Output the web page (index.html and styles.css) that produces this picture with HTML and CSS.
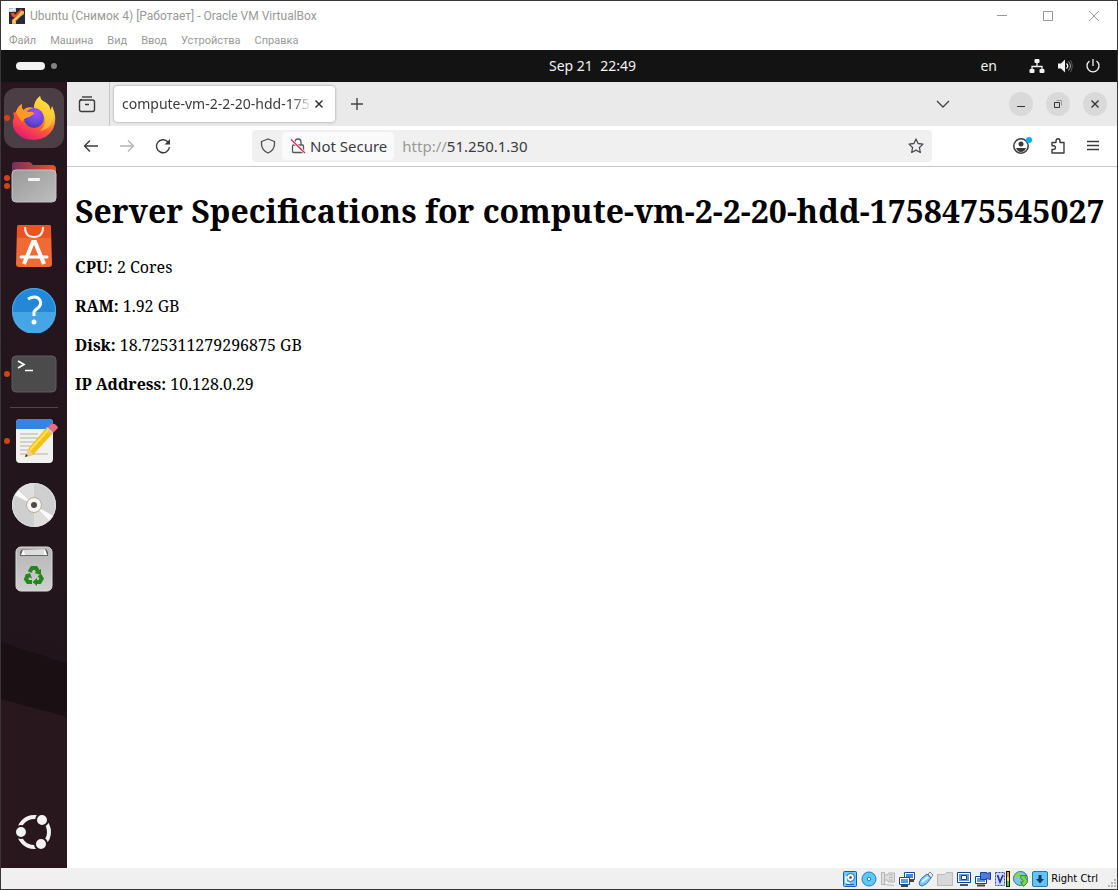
FILE: index.html
```html
<!DOCTYPE html>
<html lang="ru">
<head>
<meta charset="utf-8">
<title>Ubuntu (Снимок 4) [Работает] - Oracle VM VirtualBox</title>
<link rel="stylesheet" href="styles.css">
</head>
<body>
<div class="vm-window">
  <header class="titlebar">
    <svg class="app-icon" width="16" height="16" viewBox="0 0 16 16" aria-hidden="true"><rect width="16" height="16" fill="#262a3c"/><path d="M3 5q2 4 4 3L13 2" stroke="#e8501c" stroke-width="3" fill="none"/><path d="M15 3v3l-4 3-4 4v3H3v-4l5-4 4-5z" fill="#f7a93f"/><path d="M13 4l-4 5-4 3v3" stroke="#ffe3a0" fill="none"/><path d="M0 0h7v4H0z" fill="#b9bcc2"/><path d="M1 1v2h2V1m1 2V1h2v2" stroke="#fff" fill="none"/></svg>
    <span class="window-title">Ubuntu (Снимок 4) [Работает] - Oracle VM VirtualBox</span>
    <div class="window-buttons">
      <button class="plain" aria-label="Свернуть"><svg width="12" height="12" viewBox="0 0 12 12"><path d="M1 5.500h10" stroke="#999"/></svg></button>
      <button class="plain" aria-label="Развернуть"><svg width="12" height="12" viewBox="0 0 12 12"><path d="M1.500 1.500h9v9h-9z" stroke="#999" fill="none"/></svg></button>
      <button class="plain" aria-label="Закрыть"><svg width="12" height="12" viewBox="0 0 12 12"><path d="M1 1l10 10M11 1L1 11" stroke="#999"/></svg></button>
    </div>
  </header>
  <nav class="menubar">
    <button class="plain">Файл</button><button class="plain">Машина</button><button class="plain">Вид</button><button class="plain">Ввод</button><button class="plain">Устройства</button><button class="plain">Справка</button>
  </nav>

  <div class="topbar" lang="en">
    <button class="plain workspaces" aria-label="Activities"><span class="pill"></span><span class="dot"></span></button>
    <button class="plain clock">Sep 21&nbsp; 22:49</button>
    <div class="system">
      <button class="plain lang">en</button>
      <svg width="16" height="16" viewBox="0 0 16 16" fill="#f2f2f2"><rect x="5.500" y="1" width="5" height="4" rx="1"/><rect x="0.500" y="11" width="5" height="4" rx="1"/><rect x="10.500" y="11" width="5" height="4" rx="1"/><path d="M8 5v3M3 11V8.500h10V11" stroke="#f2f2f2" stroke-width="1.300" fill="none"/></svg>
      <svg width="16" height="16" viewBox="0 0 16 16"><path d="M1 5.500h3L8 1.500v13L4 10.500H1z" fill="#f2f2f2"/><path d="M9.500 5.500q2.500 2.500 0 5" stroke="#f2f2f2" stroke-width="1.300" fill="none"/><path d="M11.500 3.500q4 4.500 0 9" stroke="#aaa" fill="none"/><path d="M13.500 2q3.500 6 0 12" stroke="#555" fill="none"/></svg>
      <svg width="16" height="16" viewBox="0 0 16 16" fill="none" stroke="#f2f2f2" stroke-width="1.300"><path d="M4.500 3a6 6 0 1 0 7 0M8 1v7"/></svg>
    </div>
  </div>

  <div class="desktop" lang="en">
    <aside class="dock">
      <button class="plain app active one" aria-label="Firefox">
        <svg width="44" height="46" viewBox="0 0 44 46"><defs><linearGradient id="ff" x1=".8" y1="0" x2=".25" y2="1"><stop offset="0" stop-color="#fff04a"/><stop offset=".35" stop-color="#ffb02e"/><stop offset=".62" stop-color="#ff5a35"/><stop offset="1" stop-color="#e5127d"/></linearGradient><radialGradient id="fg" cx=".6" cy=".25" r=".8"><stop offset="0" stop-color="#a44bf5"/><stop offset=".6" stop-color="#6649dc"/><stop offset="1" stop-color="#4337a7"/></radialGradient></defs><path d="M28 1q-6 5-6 12-7-2-11 2-2-3-1-6-4 2-6 8L1 18q1 2 1 4-3 7 1 14 6 9 19 9 14-1 19-11 4-9 1-18l-2-5q-1 3-1 5-2-8-8-10-3-2-3-5z" fill="url(#ff)"/><path d="M28 1q-6 5-6 12 8 2 11 10 1 8-5 13 12-2 14-15 0-5-2-10l-1 5q-2-8-8-10-3-2-3-5z" fill="#ffd83c" opacity=".6"/><circle cx="22" cy="23" r="10" fill="url(#fg)"/><path d="M4 17q2-6 6-8-1 3 1 6 4 0 5 2 6-1 6 2-4 3-8 4-3 1-3 4-4-3-7-10z" fill="#ff9a22"/></svg>
      </button>
      <button class="plain app two" aria-label="Files">
        <svg width="46" height="42" viewBox="0 0 46 42"><defs><linearGradient id="fb"><stop offset="0" stop-color="#78305b"/><stop offset="1" stop-color="#ee512b"/></linearGradient><linearGradient id="fc" x1="0" y1="0" x2="1" y2="1"><stop offset="0" stop-color="#999"/><stop offset="1" stop-color="#bebebe"/></linearGradient></defs><path d="M1 4q0-3 3-3h14q2 0 4 3h19q4 0 4 4v20H1z" fill="url(#fb)"/><rect x="1" y="9" width="44" height="32" rx="4" fill="url(#fc)" stroke="#c4c4c4"/><rect x="17" y="17" width="12" height="3" rx="1" fill="#f5f5f5"/></svg>
      </button>
      <button class="plain app" aria-label="App Center">
        <svg width="38" height="44" viewBox="0 0 38 44"><path d="M4 1h30q2 0 2 3l1 36q0 3-3 3H4q-3 0-3-3L2 4q0-3 2-3z" fill="#f06a35"/><path d="M4 1h30q2 0 2 3v10H2V4q0-3 2-3z" fill="#e95420"/><path d="M10 3q0 10 9 10t9-10" stroke="#f6f0ec" stroke-width="2" fill="none"/><path d="M9 40l9-22h2l9 22" stroke="#fff" stroke-width="4" fill="none"/><path d="M6 33h26" stroke="#fff" stroke-width="3" stroke-linecap="round"/></svg>
      </button>
      <button class="plain app" aria-label="Help">
        <svg width="46" height="46" viewBox="0 0 46 46"><circle cx="23" cy="23" r="22" fill="#2488d8"/><path d="M1 25a22 22 0 0 0 44 0z" fill="#46a5e5"/><circle cx="23" cy="23" r="21.500" fill="none" stroke="#50aae4"/><path d="M17 12q6-3.500 10-1 5 4 1 9-4 3-5 5v4" stroke="#fff" stroke-width="3" fill="none"/><circle cx="23" cy="35" r="2.500" fill="#fff"/></svg>
      </button>
      <button class="plain app one" aria-label="Terminal">
        <svg width="46" height="38" viewBox="0 0 46 38"><rect x="1" y="1" width="44" height="36" rx="4" fill="#4b4b4b" stroke="#5c5c5c"/><path d="M7 6l6 3.500L7 13M14 15.500h8" stroke="#fff" stroke-width="1.700" fill="none"/></svg>
      </button>
      <hr class="dock-line">
      <button class="plain app one" aria-label="Text Editor">
        <svg width="48" height="48" viewBox="0 0 48 48"><rect x="6" y="2" width="37" height="44" rx="4" fill="#f1f1ef"/><path d="M6 12V6q0-4 4-4h29q4 0 4 4v6z" fill="#3584e4"/><path d="M10 17h18M10 21h18M10 25h16M10 29h14M10 33h9M10 37h28" stroke="#c9c6bd" stroke-width="1.600"/><path d="M18 32L37 10l6 6-20 22-7 2z" fill="#f5c211"/><path d="M20 33l19-21" stroke="#ffe15a" stroke-width="2"/><path d="M38 10l3-3q5-1 7 4l-5 5z" fill="#ed6b73"/><path d="M37 11l5 5" stroke="#ccc" stroke-width="2"/><path d="M18 32l-3 8 8-3z" fill="#edce9c"/><path d="M16 37l-1 3 3-1z" fill="#333"/></svg>
      </button>
      <button class="plain app" aria-label="Disc">
        <svg width="46" height="46" viewBox="0 0 46 46"><circle cx="23" cy="23" r="22" fill="#cfcfcf"/><path d="M23 23L8 7A22 22 0 0 1 23 1zM23 23l15 16A22 22 0 0 1 23 45z" fill="#dedede"/><path d="M23 23L3.500 13l4-5zM23 23l19.500 11-4 5z" fill="#fafafa"/><circle cx="23" cy="23" r="21.500" fill="none" stroke="#e0e0e0"/><circle cx="23" cy="23" r="7.500" fill="#f5f5f5" stroke="#b8ac8c"/><circle cx="23" cy="23" r="3" fill="#4b4b4b"/></svg>
      </button>
      <button class="plain app" aria-label="Trash">
        <svg width="38" height="46" viewBox="0 0 38 46"><defs><linearGradient id="tr" x2="0" y2="1"><stop offset="0" stop-color="#b4b4b4"/><stop offset="1" stop-color="#d0d0d0"/></linearGradient></defs><rect x="1" y="1" width="36" height="44" rx="5" fill="url(#tr)" stroke="#ddd"/><path d="M5 10V6l2-3h24l2 3v4z" fill="#666"/><path d="M6 9l2-5 22-1 2 6z" fill="#fff"/><path d="M7 4h23M9 6h20M10 8h19" stroke="#bbb"/><g fill="none" stroke="#26851f" stroke-width="4"><path d="M14.500 26l2.500-4h4l2 3.500"/><path d="M24.500 29l2.200 3.800-2 3.200H21"/><path d="M17 36h-4l-2-3 2-4"/></g><path d="M19.500 27l6.500-4v6zM22 32v8l-4.500-4zM9.500 29l5.500-2 2 5.500z" fill="#26851f"/></svg>
      </button>
      <button class="plain app show-apps" aria-label="Show Apps">
        <svg width="38" height="38" viewBox="0 0 38 38"><circle cx="19" cy="19" r="15" fill="none" stroke="#f2f2f2" stroke-width="4"/><g fill="#f2f2f2" stroke="#29171e" stroke-width="2"><circle cx="6" cy="19" r="6"/><circle cx="27" cy="7" r="6"/><circle cx="26" cy="31" r="6"/></g></svg>
      </button>
    </aside>

    <section class="browser">
      <div class="tabstrip">
        <button class="plain recent" aria-label="Firefox View"><svg width="18" height="18" viewBox="0 0 18 18" fill="none" stroke="#3b3b3f" stroke-width="1.400"><path d="M4 2h10"/><rect x="1.500" y="5" width="15" height="11.500" rx="2"/><path d="M2 6q0-1.500 2-1.500M7 9.500h4"/></svg></button>
        <div class="tab">
          <button class="plain tab-title">compute-vm-2-2-20-hdd-1758475545027</button>
          <button class="plain" aria-label="Close tab"><svg width="10" height="10" viewBox="0 0 10 10"><path d="M1.500 1.500l7 7m0-7l-7 7" stroke="#333" stroke-width="1.500"/></svg></button>
        </div>
        <button class="plain new-tab" aria-label="New tab"><svg width="14" height="14" viewBox="0 0 14 14"><path d="M7 1v12M1 7h12" stroke="#444" stroke-width="1.400"/></svg></button>
        <button class="plain all-tabs" aria-label="List all tabs"><svg width="14" height="14" viewBox="0 0 14 14"><path d="M1 4l6 6 6-6" stroke="#444" stroke-width="1.400" fill="none"/></svg></button>
        <div class="round-buttons">
          <button class="plain round" aria-label="Minimize"><svg width="10" height="10" viewBox="0 0 10 10"><path d="M1 7.500h8" stroke="#333"/></svg></button>
          <button class="plain round" aria-label="Restore"><svg width="10" height="10" viewBox="0 0 10 10" fill="none"><path d="M1.500 3.500h5v5h-5z" stroke="#333"/><path d="M3.500 1.500h5v5" stroke="#999"/></svg></button>
          <button class="plain round" aria-label="Close"><svg width="10" height="10" viewBox="0 0 10 10"><path d="M1.500 1.500l7 7m0-7l-7 7" stroke="#333" stroke-width="1.400"/></svg></button>
        </div>
      </div>

      <div class="navbar">
        <div class="history">
          <button class="plain" aria-label="Back"><svg width="16" height="16" viewBox="0 0 16 16" fill="none" stroke="#3b3b3f" stroke-width="1.400"><path d="M15 8H1.500M7 2.500L1.500 8 7 13.500"/></svg></button>
          <button class="plain" aria-label="Forward"><svg width="16" height="16" viewBox="0 0 16 16" fill="none" stroke="#b5b5b7" stroke-width="1.400"><path d="M1 8h13.500M9 2.500L14.500 8 9 13.500"/></svg></button>
          <button class="plain" aria-label="Reload"><svg width="16" height="16" viewBox="0 0 16 16" fill="none" stroke="#3b3b3f" stroke-width="1.400"><path d="M13 4a6.500 6.500 0 1 0 1.500 5"/><path d="M15 1v5.500H9.500z" fill="#3b3b3f" stroke="none"/></svg></button>
        </div>
        <div class="urlbar">
          <button class="plain shield" aria-label="Tracking protection"><svg width="16" height="16" viewBox="0 0 16 16" fill="none" stroke="#4c4c50" stroke-width="1.300"><path d="M8 1l6.500 2.500v3Q14 12.500 8 15 2 12.500 1.500 6.500v-3z" stroke-linejoin="round"/></svg></button>
          <button class="plain security"><svg width="16" height="16" viewBox="0 0 16 16" fill="none" stroke="#55555a" stroke-width="1.300"><path d="M5 7V4q0-3 3-3t3 3v3"/><rect x="2.500" y="7" width="11" height="7.500" rx="1"/><path d="M1 1.500l14 13.500" stroke="#fbfbfb" stroke-width="3"/><path d="M1 1.500l14 13.500" stroke="#e22850" stroke-width="1.400"/></svg><span>Not Secure</span></button>
          <label class="scheme" for="address">http://</label><input id="address" class="address" type="text" value="51.250.1.30">
          <button class="plain" aria-label="Bookmark this page"><svg width="16" height="16" viewBox="0 0 16 16" fill="none" stroke="#4c4c50" stroke-width="1.300"><path d="M8 1l2.100 4.500 4.900.6-3.600 3.400.9 5L8 12.100l-4.300 2.400.9-5L1 6.100l4.900-.6z" stroke-linejoin="round"/></svg></button>
        </div>
        <div class="tools">
          <button class="plain" aria-label="Account"><svg width="20" height="18" viewBox="0 0 20 18"><circle cx="9" cy="9" r="7.200" fill="none" stroke="#3b3b3f" stroke-width="1.500"/><circle cx="9" cy="7" r="2.500" fill="#3b3b3f"/><path d="M4 11h10q-1.500 4-5 4t-5-4z" fill="#3b3b3f"/><circle cx="17" cy="3" r="3" fill="#00b3f4"/></svg></button>
          <button class="plain" aria-label="Extensions"><svg width="16" height="18" viewBox="0 0 16 18" fill="none" stroke="#3b3b3f" stroke-width="1.400"><path d="M2 5.500h4V4q0-2.300 2-2.300T10 4v1.500h4V16H2v-3.500h1.500q2-.2 2-2t-2-1.700H2z" stroke-linejoin="round"/></svg></button>
          <button class="plain menu" aria-label="Menu"><svg width="14" height="14" viewBox="0 0 14 14"><path d="M1 2.500h12M1 6.500h12M1 10.500h12" stroke="#3b3b3f" stroke-width="1.300"/></svg></button>
        </div>
      </div>

      <main class="page">
        <h1>Server Specifications for compute-vm-2-2-20-hdd-1758475545027</h1>
        <p><strong>CPU:</strong> 2 Cores</p>
        <p><strong>RAM:</strong> 1.92 GB</p>
        <p><strong>Disk:</strong> 18.725311279296875 GB</p>
        <p><strong>IP Address:</strong> 10.128.0.29</p>
      </main>
    </section>
  </div>

  <footer class="statusbar">
    <svg width="16" height="16" viewBox="0 0 16 16"><rect x="1.500" y=".500" width="13" height="15" rx="1" fill="#6cc8f5" stroke="#1f5aa8"/><circle cx="8.500" cy="6.500" r="4" fill="#fff" stroke="#2467b2"/><circle cx="8.500" cy="6.500" r="1.300" fill="#1d4f94"/><path d="M4 5v6l4 2" stroke="#fff" stroke-width="1.500" fill="none"/><path d="M4 13.500h8" stroke="#1f5aa8"/></svg>
    <svg width="16" height="16" viewBox="0 0 16 16"><circle cx="8" cy="8" r="7" fill="#5cc8fc" stroke="#287dbc"/><circle cx="8" cy="8" r="1.700" fill="#fff" stroke="#287dbc"/></svg>
    <svg width="16" height="16" viewBox="0 0 16 16" fill="#e0e0e0" stroke="#b5b5b5"><path d="M1.500 1.500h3v12h-3zM4.500 4h3l1-2h6v9h-6l-1-2h-3z"/><path d="M9 4h4M9 6.500h4M9 9h4M4 13.500l10 1" fill="none"/></svg>
    <svg width="16" height="16" viewBox="0 0 16 16"><path d="M5.500 1.500h10v7h-10z" fill="#fff" stroke="#1c4a98"/><path d="M7 3h7v4H7z" fill="#4485dc"/><path d="M10 10h5" stroke="#444" stroke-width="2"/><path d="M.5 6.500h10v7H.5z" fill="#fff" stroke="#1c4a98"/><path d="M2 8h7v4H2z" fill="#5b9ce8"/><path d="M2 15h7" stroke="#444" stroke-width="2"/></svg>
    <svg width="16" height="16" viewBox="0 0 16 16"><path d="M10 3l2-2 3 3-2 3z" fill="#eee" stroke="#888"/><path d="M1 12q1-5 8-9l4 4q-4 7-9 8-3 0-3-3z" fill="#7bcbfa" stroke="#3976b8"/><path d="M4 11l6-5" stroke="#dff3ff" stroke-width="2"/></svg>
    <svg width="16" height="16" viewBox="0 0 16 16"><path d="M.5 3.500h7l2-2h6v13H.5z" fill="#d8d8d8" stroke="#bababa"/></svg>
    <svg width="16" height="16" viewBox="0 0 16 16"><path d="M1.500 1.500h13v10h-13z" fill="#fff" stroke="#173e88"/><path d="M3 3h10v7H3z" fill="#5a9be6"/><path d="M5.500 4.500h5v4h-5z" fill="#fff" stroke="#173e88"/><path d="M4 14h8" stroke="#555" stroke-width="2"/></svg>
    <svg width="16" height="16" viewBox="0 0 16 16"><path d="M.5 5.500h11v7H.5z" fill="#fff" stroke="#173e88"/><path d="M2 7h8v4H2z" fill="#5a9be6"/><path d="M5.500 1.500h6v1l4-1v7l-4-1v1h-6z" fill="#5578e0" stroke="#24419a"/><path d="M2 14.500h8" stroke="#444" stroke-width="2"/></svg>
    <svg width="16" height="16" viewBox="0 0 16 16"><path d="M1.500 1.500h9v13h-9z" fill="#cbdcff" stroke="#3646a8" stroke-dasharray="2 1"/><path d="M3.500 4l2.500 7 3-7" stroke="#2730a0" stroke-width="1.700" fill="none"/><path d="M12 0h4v16h-4z" fill="#111"/><path d="M13 1h2v5h-2z" fill="#f0a018"/><path d="M13 6h2v4h-2z" fill="#edf02a"/><path d="M13 10h2v5h-2z" fill="#46d52b"/></svg>
    <svg width="16" height="16" viewBox="0 0 16 16"><circle cx="7.500" cy="7.500" r="7" fill="#7ac6ee" stroke="#25759b"/><path d="M2 4l4-3 2 2-2 3-3 2zM3 10l3 1v3z" fill="#91d44e"/><path d="M7.500 4.500h6l-1.500 2q4 3 1.500 6l-3 3-3-4.500h2.500q1-2-2-3z" fill="#7ad848" stroke="#328c29"/></svg>
    <svg width="16" height="16" viewBox="0 0 16 16"><rect x=".500" y=".500" width="15" height="15" rx="1.500" fill="#5fc5f5" stroke="#2a78aa"/><path d="M6.500 4h3v4H12l-4 4.500L4 8h2.500z" fill="#123d69"/></svg>
    <span class="host-key">Right Ctrl</span>
    <svg class="grip" width="10" height="10" viewBox="0 0 10 10" fill="#b8b8b8"><path d="M7 0h2v2H7zM4 3h2v2H4zM7 3h2v2H7zM1 6h2v2H1zM4 6h2v2H4zM7 6h2v2H7z"/></svg>
  </footer>
</div>
</body>
</html>
```

FILE: styles.css
```css
* { box-sizing: border-box; }

body { margin: 0; }

.plain {
  margin: 0;
  padding: 0;
  border: 0;
  background: none;
  color: inherit;
  font: inherit;
}

svg { display: block; flex: none; }

.vm-window {
  display: flex;
  flex-direction: column;
  min-height: 100vh;
  border: 1px solid #393735;
  background: #fff;
}

.titlebar {
  display: flex;
  align-items: center;
  height: 30px;
  padding: 0 17px 0 8px;
  gap: 5px;
  color: #999;
  font: 12px/16px Roboto, sans-serif;
}

.window-buttons { display: flex; gap: 34px; margin-left: auto; }

.menubar {
  display: flex;
  gap: 14px;
  height: 19px;
  padding: 0 8px;
  color: #999;
  font: 11px/20px Roboto, sans-serif;
}

.topbar {
  display: grid;
  grid-template-columns: 1fr auto 1fr;
  align-items: center;
  height: 32px;
  padding: 0 16px 0 15px;
  background: #131313;
  color: #f2f2f2;
  font: 14px/20px "Noto Sans", sans-serif;
}

.workspaces { display: flex; align-items: center; gap: 6px; }
.pill { width: 29px; height: 8px; border-radius: 4px; background: #f2f2f2; }
.dot { width: 6px; height: 6px; border-radius: 3px; background: #848484; }
.clock { margin-left: 68px; }
.system { display: flex; align-items: center; justify-content: flex-end; gap: 12px; }
.lang { margin-right: 20px; }

.desktop { display: flex; flex: 1; }

.dock {
  display: flex;
  flex-direction: column;
  gap: 4px;
  width: 66px;
  flex: none;
  padding: 6px 3px;
  background: linear-gradient(195deg, transparent 79%, #29171e 79%), linear-gradient(198deg, #28151f 0, #21151b 72%, #1a1013 72%);
}

.app {
  position: relative;
  display: flex;
  align-items: center;
  justify-content: center;
  height: 60px;
  border-radius: 12px;
}

.active { background: #4c3e45; }

.one::before,
.two::before {
  content: "";
  position: absolute;
  left: 0;
  width: 6px;
  height: 6px;
  border-radius: 3px;
  background: #d04516;
}

.two::before { top: 23px; box-shadow: 0 8px #d04516; }

.dock-line { width: 48px; height: 1px; margin: -1px auto; border: 0; background: #51444b; }
.show-apps { margin-top: auto; }

.browser { display: flex; flex-direction: column; flex: 1; min-width: 0; color: #3b3b3f; font: 14px/20px "Noto Sans", sans-serif; }

.tabstrip { display: flex; align-items: center; height: 44px; padding-right: 10px; background: #eaeaea; }
.recent { display: flex; align-items: center; justify-content: center; width: 43px; height: 44px; padding-right: 2px; border-right: 1px solid #c5c5c5; }

.tab {
  display: flex;
  align-items: center;
  gap: 2px;
  width: 221px;
  height: 36px;
  margin-left: 4px;
  padding: 0 11px 0 8px;
  border-radius: 4px;
  background: #fff;
  box-shadow: 0 0 3px #999;
}

.tab-title {
  flex: 1;
  min-width: 0;
  overflow: hidden;
  text-align: left;
  white-space: nowrap;
  mask-image: linear-gradient(to left, transparent, #000 20px);
}

.new-tab { margin-left: 15px; }
.all-tabs { margin-left: auto; }
.round-buttons { display: flex; gap: 13px; margin-left: 59px; }
.round { display: flex; align-items: center; justify-content: center; width: 24px; height: 24px; border-radius: 12px; background: #d9d9d9; }

.navbar { display: flex; align-items: center; height: 41px; padding: 0 17px 0 16px; border-bottom: 1px solid #c6c6c6; background: #fff; }
.history { display: flex; gap: 20px; }
.urlbar { display: flex; align-items: center; flex: 1; height: 32px; margin: 0 80px 0 81px; padding-right: 8px; border-radius: 4px; background: #f0f0f0; font-size: 15px; }
.shield { margin: 0 6px 0 8px; }
.security { display: flex; align-items: center; gap: 4px; height: 28px; padding: 0 7px 0 8px; border-radius: 4px; background: #fafafa; white-space: nowrap; }
.scheme { margin-left: 8px; color: #999; }
.address { flex: 1; min-width: 0; padding: 0; border: 0; outline: 0; background: none; color: inherit; font: inherit; }
.tools { display: flex; align-items: center; gap: 18px; }
.menu { margin-left: 2px; }

.page { flex: 1; padding: 0 8px; color: #000; font: 16px/23px "Noto Serif", "DejaVu Serif Condensed", serif; }
.page h1 { margin: 22px 0 23px; font-size: 32px; line-height: 44px; white-space: nowrap; }
.page p { margin: 16px 0; }

.statusbar {
  display: flex;
  align-items: center;
  justify-content: flex-end;
  gap: 3px;
  height: 21px;
  background: #f0f0f0;
  color: #000;
  font: 11px/16px "DejaVu Sans Condensed", sans-serif;
}

.grip { align-self: flex-end; margin-left: 6px; }
```
